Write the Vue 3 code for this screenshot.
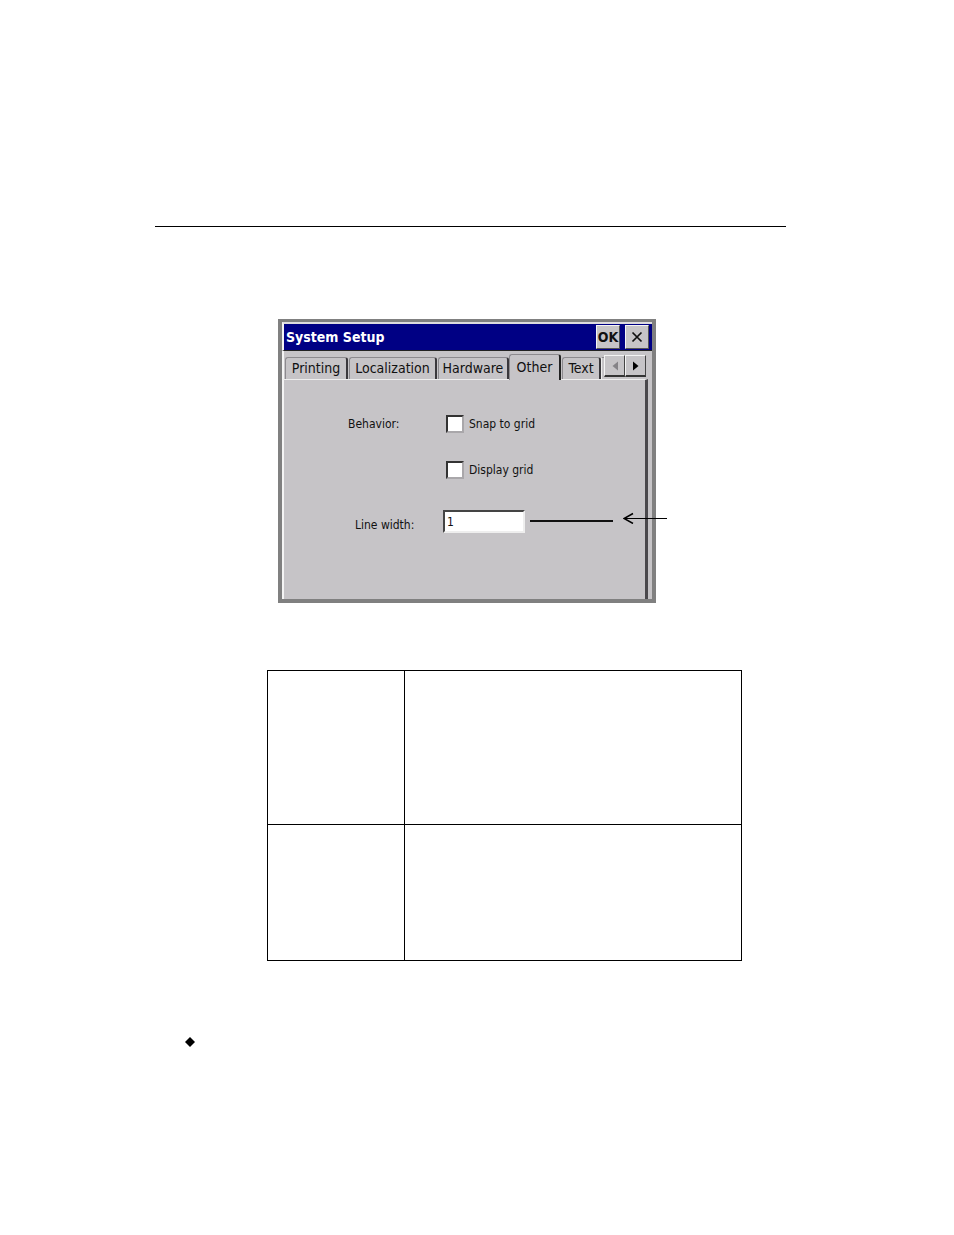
<template>
  <main class="page">
    <hr class="rule" />

    <figure class="figure">
      <section class="window">
        <header class="title-bar">
          <h1 class="title">System Setup</h1>
          <button type="button" class="title-button">OK</button>
          <button type="button" class="title-button" aria-label="Close">
            <svg width="12" height="12" viewBox="0 0 12 12">
              <path d="M1.5 1.5 L10.5 10.5 M10.5 1.5 L1.5 10.5" stroke="#111" stroke-width="1.7" />
            </svg>
          </button>
        </header>

        <nav class="tabs">
          <button
            v-for="tab in tabs"
            :key="tab"
            type="button"
            class="tab"
            :class="[tab.toLowerCase(), { active: tab === activeTab }]"
            @click="activeTab = tab"
          >
            {{ tab }}
          </button>
          <span class="tab-edge"></span>
          <div class="scroller">
            <button type="button" class="scroll-button" aria-label="Previous tabs" disabled>
              <svg width="6" height="10" viewBox="0 0 6 10">
                <path d="M6 0.5 L0.5 5 L6 9.5 Z" fill="#858387" />
              </svg>
            </button>
            <button type="button" class="scroll-button" aria-label="Next tabs">
              <svg width="6" height="10" viewBox="0 0 6 10">
                <path d="M0 0.5 L5.5 5 L0 9.5 Z" fill="#000" />
              </svg>
            </button>
          </div>
        </nav>

        <form class="panel" @submit.prevent>
          <div class="row">
            <span class="row-label">Behavior:</span>
            <input id="snap" v-model="snapToGrid" type="checkbox" class="check" />
            <label for="snap">Snap to grid</label>
          </div>
          <div class="row">
            <span class="row-label"></span>
            <input id="display" v-model="displayGrid" type="checkbox" class="check" />
            <label for="display">Display grid</label>
          </div>
          <div class="row width-row">
            <label for="line-width" class="row-label">Line width:</label>
            <input id="line-width" v-model="lineWidth" type="text" class="text-box" />
            <span class="preview"></span>
          </div>
        </form>
      </section>

      <svg class="pointer" width="44" height="12" viewBox="0 0 44 12">
        <path d="M1 6.5 H44" fill="none" stroke="#000" stroke-width="1" />
        <path d="M10 1.5 L1 6.5 L10 11.5" fill="none" stroke="#000" stroke-width="1.5" />
      </svg>
    </figure>

    <table class="notes">
      <tbody>
        <tr class="tall">
          <td class="term"></td>
          <td></td>
        </tr>
        <tr>
          <td class="term"></td>
          <td></td>
        </tr>
      </tbody>
    </table>

    <svg class="bullet" width="10" height="10" viewBox="0 0 10 10">
      <path d="M5 0 L10 5 L5 10 L0 5 Z" fill="#000" />
    </svg>
  </main>
</template>

<script setup>
import { ref } from 'vue';

const tabs = ['Printing', 'Localization', 'Hardware', 'Other', 'Text'];
const activeTab = ref('Other');
const snapToGrid = ref(false);
const displayGrid = ref(false);
const lineWidth = ref('1');
</script>

<style>
body {
  margin: 0;
  background: #fff;
}
</style>

<style scoped>
.page {
  padding: 226px 168px 180px 155px;
  font-family: 'DejaVu Sans Condensed', 'DejaVu Sans', sans-serif;
  font-size: 12px;
  line-height: 16px;
  color: #111;
}

.page * {
  box-sizing: border-box;
}

.page button,
.page input {
  margin: 0;
  padding: 0;
  font: inherit;
  color: inherit;
  border-radius: 0;
}

.rule {
  height: 1px;
  margin: 0;
  border: 0;
  background: #000;
}

.figure {
  position: relative;
  margin: 92px 130px 0 123px;
}

.window {
  border: 4px solid #808080;
  border-top-width: 3px;
  background: #c6c4c7;
}

.title-bar {
  display: flex;
  align-items: center;
  gap: 5px;
  height: 29px;
  padding: 0 3px 0 2px;
  border-top: 2px solid #dedcde;
  border-left: 2px solid #f4f4f4;
  border-bottom: 1px solid #222;
  background: #000084;
}

.title {
  flex: 1;
  margin: 0;
  font-size: 14px;
  font-weight: bold;
  color: #fff;
}

.title-button {
  display: flex;
  align-items: center;
  justify-content: center;
  width: 24px;
  height: 24px;
  border: 1px solid;
  border-color: #f4f4f4 #555 #555 #f4f4f4;
  background: #c6c4c7;
}

.page .title-button {
  font-size: 14px;
  font-weight: bold;
}

.tabs {
  display: flex;
  align-items: flex-end;
  height: 28px;
  border-left: 2px solid #f4f4f4;
}

.tab {
  height: 22px;
  border: 1px solid #8c8a8e;
  border-right: 2px solid #3a383c;
  border-bottom: 0;
  background: #c6c4c7;
  white-space: nowrap;
}

.page .tab {
  margin-left: 1px;
  padding-bottom: 2px;
  border-radius: 3px 3px 0 0;
  font-size: 14px;
}

.printing {
  width: 63px;
}

.localization {
  width: 88px;
}

.hardware {
  width: 71px;
}

.other {
  width: 52px;
}

.text {
  width: 39px;
}

/* the open tab covers the top edge of the panel */
.page .active {
  position: relative;
  height: 26px;
  margin: 0 0 -1px;
  border-right-color: #222;
}

.tab-edge {
  width: 3px;
  height: 22px;
  border-top: 1px solid #8c8a8e;
  border-left: 1px solid #eee;
}

.scroller {
  display: flex;
  align-self: flex-start;
  margin-top: 4px;
}

.scroll-button {
  display: flex;
  align-items: center;
  justify-content: center;
  width: 21px;
  height: 22px;
  border: 1px solid;
  border-color: #f4f4f4 #444 #333 #f4f4f4;
  border-bottom-width: 2px;
  background: #c6c4c7;
}

.panel {
  display: flex;
  flex-direction: column;
  gap: 28px;
  height: 220px;
  margin-right: 4px;
  padding: 35px 0 0 64px;
  border-top: 1px solid #eee;
  border-left: 2px solid #f4f4f4;
  border-right: 3px solid #4a484c;
}

.row {
  display: flex;
  align-items: center;
  height: 18px;
}

.row-label {
  width: 98px;
}

.check {
  appearance: none;
  width: 18px;
  height: 18px;
  border: 2px solid;
  border-color: #333 #a9a7aa #a9a7aa #333;
  background: #fff;
}

.check:checked {
  background: #000084;
}

.page .check {
  margin-right: 5px;
}

.width-row {
  height: 29px;
  padding-left: 7px;
}

.width-row .row-label {
  width: 88px;
  padding-top: 6px;
}

.text-box {
  width: 82px;
  height: 23px;
  border: 2px solid;
  border-color: #444 #eee #eee #444;
  background: #fff;
}

.page .text-box {
  padding-left: 2px;
}

.preview {
  width: 83px;
  height: 2px;
  margin: 0 0 2px 5px;
  background: #111;
}

/* callout arrow reaching into the window from the right margin */
.pointer {
  position: absolute;
  top: 193px;
  right: -11px;
}

.notes {
  width: calc(100% - 156px);
  margin: 67px 44px 0 112px;
  border-collapse: collapse;
  table-layout: fixed;
}

.notes td {
  height: 136px;
  padding: 0;
  border: 1px solid #000;
}

.notes .tall td {
  height: 154px;
}

.notes .term {
  width: 137px;
}

.bullet {
  display: block;
  margin: 76px 0 0 30px;
}
</style>
